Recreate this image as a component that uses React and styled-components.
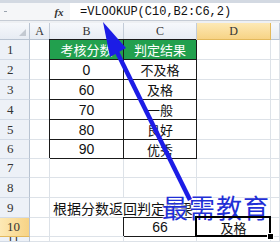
import styled, { createGlobalStyle } from 'styled-components';

const GlobalStyle = createGlobalStyle`
  html, body { margin: 0; padding: 0; background: #fff; }
  body { width: 280px; height: 242px; overflow: hidden; }
`;

const Page = styled.div`
  position: relative;
  width: 280px;
  height: 242px;
  overflow: hidden;
  background: #fff;
  font-family: "Liberation Sans", "Noto Sans CJK SC", sans-serif;
`;

const TopStrip = styled.div`
  height: 3px;
  background: #d3d9e2;
`;

const FormulaBar = styled.div`
  display: flex;
  height: 18px;
  box-sizing: border-box;
  background: #f5f6f8;
  border-bottom: 1px solid #c6ccd5;
`;

const NameBox = styled.div`
  width: 48px;
  display: flex;
  align-items: center;
  padding-left: 4px;
  box-sizing: border-box;
  &::before {
    content: '';
    width: 3px;
    height: 1px;
    background: #9aa3ae;
  }
`;

const FxButton = styled.div`
  width: 22px;
  display: flex;
  align-items: center;
  justify-content: center;
  font-family: "Liberation Serif", serif;
  font-style: italic;
  font-weight: bold;
  font-size: 11px;
  color: #333;
`;

const FormulaInput = styled.div`
  flex: 1;
  display: flex;
  align-items: center;
  padding-left: 10px;
  background: #fff;
  font-family: "Liberation Mono", monospace;
  font-size: 12px;
  color: #111;
  white-space: nowrap;
`;

const Gap = styled.div`
  height: 2px;
  background: #eef0f3;
`;

const Grid = styled.div`
  display: grid;
  grid-template-columns: 30px 20px 74px 73px 74px 1fr;
  grid-template-rows: 17px 20px 20px 20px 20px 20px 19px 19px 20px 20px 19px 1fr;
  height: 219px;
`;

const Corner = styled.div`
  position: relative;
  box-sizing: border-box;
  background: linear-gradient(#f6f8fb, #e7ecf3);
  border-right: 1px solid #b8c3d1;
  border-bottom: 1px solid #b8c3d1;
  &::after {
    content: '';
    position: absolute;
    right: 3px;
    bottom: 3px;
    border-left: 7px solid transparent;
    border-bottom: 7px solid #c3c9d1;
  }
`;

const ColHead = styled.div`
  box-sizing: border-box;
  display: flex;
  align-items: center;
  justify-content: center;
  font-family: "Liberation Serif", serif;
  font-size: 12px;
  color: #333;
  background: ${p => (p.$active ? 'linear-gradient(#fde9b5, #f7d385)' : 'linear-gradient(#f6f8fb, #e7ecf3)')};
  border-right: 1px solid ${p => (p.$active ? '#e3b95c' : '#c3ccd8')};
  border-bottom: 1px solid ${p => (p.$active ? '#e3b95c' : '#b8c3d1')};
`;

const RowHead = styled.div`
  box-sizing: border-box;
  display: flex;
  align-items: center;
  padding-left: 7px;
  overflow: hidden;
  font-family: "Liberation Serif", serif;
  font-size: 13px;
  color: #333;
  background: ${p => (p.$active ? 'linear-gradient(90deg, #fde9b5, #f7d385)' : '#edf1f7')};
  border-right: 1px solid #b8c3d1;
  border-bottom: 1px solid ${p => (p.$active ? '#e3b95c' : '#d3dbe6')};
`;

const Cell = styled.div`
  position: relative;
  z-index: ${p => (p.$selected ? 1 : 'auto')};
  box-sizing: border-box;
  grid-column: span ${p => p.$span || 1};
  display: flex;
  align-items: center;
  justify-content: ${p => (p.$left ? 'flex-start' : 'center')};
  padding: 0 3px;
  white-space: nowrap;
  font-size: ${p => (p.$cjk ? 13 : 14)}px;
  color: ${p => (p.$head ? '#fff' : '#111')};
  background: ${p => (p.$head ? '#22a04e' : 'transparent')};
  border-right: 1px solid ${p => (p.$box ? '#1a1a1a' : '#dde2e8')};
  border-bottom: 1px solid ${p => (p.$box ? '#1a1a1a' : '#dde2e8')};
  box-shadow: ${p => (p.$box ? '-1px -1px 0 #1a1a1a' : 'none')};

  ${p => p.$selected && `
    &::after {
      content: '';
      position: absolute;
      left: -2px; top: -2px; right: -1px; bottom: -1px;
      border: 2px solid #000;
    }
    &::before {
      content: '';
      position: absolute;
      right: -4px; bottom: -4px;
      width: 5px; height: 5px;
      background: #000;
      border: 1px solid #fff;
      z-index: 2;
    }
  `}
`;

const Watermark = styled.div`
  position: absolute;
  left: 162px;
  top: 194px;
  font-family: "Noto Sans CJK SC", sans-serif;
  font-size: 26px;
  line-height: 1;
  letter-spacing: 1px;
  color: #1f2fd6;
  text-shadow: 0 0 2px #fff, 0 0 2px #fff;
  white-space: nowrap;
`;

const Overlay = styled.svg`
  position: absolute;
  left: 0;
  top: 0;
  pointer-events: none;
`;

const columns = ['A', 'B', 'C', 'D', 'E'];

const rows = [
  { B: { text: '考核分数', head: true, box: true, cjk: true }, C: { text: '判定结果', head: true, box: true, cjk: true } },
  { B: { text: '0', box: true }, C: { text: '不及格', box: true, cjk: true } },
  { B: { text: '60', box: true }, C: { text: '及格', box: true, cjk: true } },
  { B: { text: '70', box: true }, C: { text: '一般', box: true, cjk: true } },
  { B: { text: '80', box: true }, C: { text: '良好', box: true, cjk: true } },
  { B: { text: '90', box: true }, C: { text: '优秀', box: true, cjk: true } },
  {},
  {},
  { B: { text: '根据分数返回判定结果', span: 2, left: true } },
  { C: { text: '66', box: true }, D: { text: '及格', box: true, cjk: true, selected: true } },
  {},
];

const ACTIVE_ROW = 10;
const ACTIVE_COL = 'D';

function SheetRow({ num, data }) {
  const out = [
    <RowHead key="h" $active={num === ACTIVE_ROW}>{num}</RowHead>,
  ];
  let skip = 0;
  columns.forEach(col => {
    if (skip > 0) {
      skip--;
      return;
    }
    const c = data[col];
    if (c && c.span) skip = c.span - 1;
    out.push(
      <Cell
        key={col}
        $span={c?.span}
        $left={c?.left}
        $box={c?.box}
        $head={c?.head}
        $cjk={c?.cjk}
        $selected={c?.selected}
      >
        {c?.text}
      </Cell>
    );
  });
  return out;
}

export default function App() {
  return (
    <Page>
      <GlobalStyle />
      <TopStrip />
      <FormulaBar>
        <NameBox />
        <FxButton>fx</FxButton>
        <FormulaInput>=VLOOKUP(C10,B2:C6,2)</FormulaInput>
      </FormulaBar>
      <Gap />
      <Grid>
        <Corner />
        {columns.map(col => (
          <ColHead key={col} $active={col === ACTIVE_COL}>{col === 'E' ? '' : col}</ColHead>
        ))}
        {rows.map((data, i) => (
          <SheetRow key={i} num={i + 1} data={data} />
        ))}
      </Grid>
      <Watermark>最需教育</Watermark>
      <Overlay width="280" height="242" viewBox="0 0 280 242">
        <line x1="190" y1="200" x2="117" y2="52" stroke="#1c1ce6" strokeWidth="4.5" />
        <polygon points="103,22 126,48 110,57" fill="#1c1ce6" />
      </Overlay>
    </Page>
  );
}
